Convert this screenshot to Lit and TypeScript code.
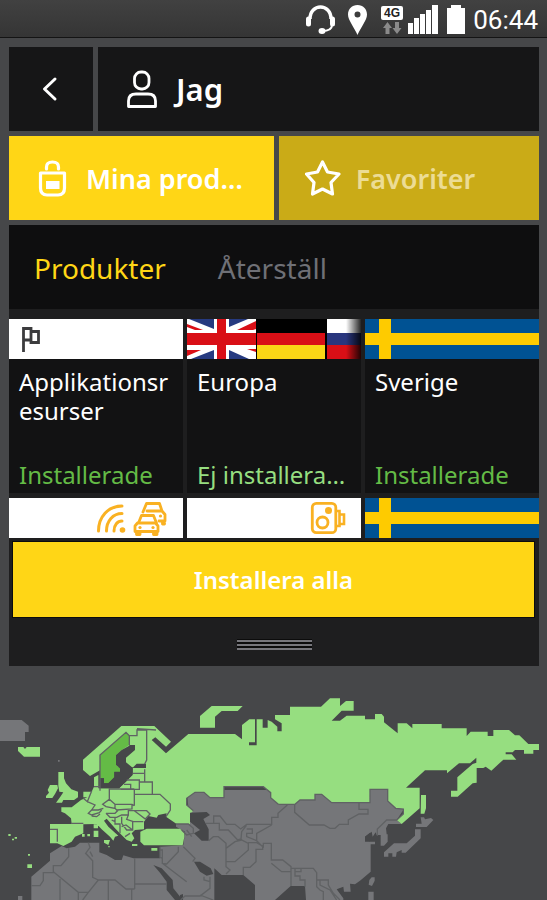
import { LitElement, html, css, svg, nothing } from "lit";
import { customElement, property, state } from "lit/decorators.js";
import { classMap } from "lit/directives/class-map.js";

const swedenFlag = html`<svg class="flag" viewBox="0 0 174 40" preserveAspectRatio="none" aria-hidden="true">
  <path fill="#005293" d="M0 0H174V40H0z" />
  <path fill="#fecb00" d="M14 0H26V14H174V26H26V40H14V26H0V14H14z" />
</svg>`;

const europeFlags = html`<svg class="flag" viewBox="0 0 174 40" preserveAspectRatio="none" aria-hidden="true">
  <defs>
    <linearGradient id="fade"><stop offset="0" stop-opacity="0" /><stop offset="1" stop-opacity="0.85" /></linearGradient>
  </defs>
  <path fill="#fff" d="M0 0H69V40H0z" />
  <path fill="#263a80" d="M2 0H27V10zM42 0H61L42 8zM4 40L27 31V40zM42 31L62 40H42z" />
  <path fill="#d90f16" d="M0 5L16 11H8L0 8zM69 2V10L66 11H50zM0 31H14L0 37zM60 30H69V33z" />
  <path fill="#fff" d="M27 0H42V11H69V30H42V40H27V30H0V11H27z" />
  <path fill="#d90f16" d="M30 0H39V14H69V26H39V40H30V26H0V14H30z" />
  <path fill="#000" d="M69 0H140V40H69z" />
  <path fill="#d90f16" d="M70 14H138V26H70z" />
  <path fill="#fad616" d="M70 26H138V40H70z" />
  <path fill="#fff" d="M140 0H174V14H140z" />
  <path fill="#29367e" d="M140 14H174V26H140z" />
  <path fill="#d90f16" d="M140 26H174V40H140z" />
  <path fill="url(#fade)" d="M159 0H174V40H159z" />
</svg>`;

const flagIcon = html`<svg class="strip-icon start" width="22" height="28" viewBox="0 0 22 28" fill="none" stroke="#3c3c3e" stroke-width="2.8" aria-hidden="true">
  <path d="M4.500 27V3.500H12V15H4.500M12 6.500H19.500V17.500H12V14" />
</svg>`;

const trafficIcon = html`<svg class="strip-icon end" width="72" height="36" viewBox="0 0 72 36" fill="none" stroke="#f9b122" stroke-width="3" stroke-linecap="round" aria-hidden="true">
  <path d="M2.500 31C2.500 17 12 6 26 6M10.500 31C10.500 21 17 13.500 26 13.500M18 31C18 25 21.500 21 26 21" />
  <circle cx="26.500" cy="30" r="2.800" fill="#f9b122" stroke="none" />
  <g stroke-linejoin="round" stroke-width="2.800">
    <path d="M47 12L50.500 3.500H63.500L66 11M51 11H66L69 14.500V21H63M66.500 21V24H68.500V21" />
    <path fill="#fff" d="M42.500 23L45.500 15.500H57.500L60.500 23" />
    <path fill="#fff" d="M41.500 23H59.500L62 26V31.500H39V26zM40.500 32V34.500H44V32M57.500 32V34.500H61V32" />
  </g>
  <circle cx="44" cy="27.500" r="1.600" fill="#f9b122" stroke="none" />
  <circle cx="57" cy="27.500" r="1.600" fill="#f9b122" stroke="none" />
  <circle cx="64.500" cy="16" r="1.600" fill="#f9b122" stroke="none" />
</svg>`;

const cameraIcon = html`<svg class="strip-icon end" width="36" height="34" viewBox="0 0 36 34" fill="none" stroke="#f9b122" stroke-width="2.800" aria-hidden="true">
  <rect x="2.300" y="2.300" width="23.500" height="29.400" rx="4" />
  <circle cx="12.500" cy="21.500" r="5.500" />
  <circle cx="18.500" cy="9.500" r="3.500" fill="#f9b122" stroke="none" />
  <path d="M26 10H29.500V25H26M29.500 13.500H34V23H29.500" stroke-width="2.600" />
</svg>`;

interface Product {
  name: string;
  status: string;
  installed: boolean;
  strip: unknown;
}

const products: Product[] = [
  { name: "Applikationsresurser", status: "Installerade", installed: true, strip: flagIcon },
  { name: "Europa", status: "Ej installera…", installed: false, strip: europeFlags },
  { name: "Sverige", status: "Installerade", installed: true, strip: swedenFlag },
];

@customElement("status-bar")
class StatusBar extends LitElement {
  static styles = css`
    :host {
      display: flex;
      justify-content: flex-end;
      align-items: center;
      height: 37px;
      padding-right: 9px;
      background: linear-gradient(#414141, #353535);
      border-bottom: 1px solid #141414;
      color: #fff;
      font: 26px/40px Roboto, sans-serif;
    }
    .icons {
      flex: none;
      margin-right: 7px;
    }
    .clock {
      padding-top: 2px;
    }
    .net {
      font: bold 12px "Liberation Sans", sans-serif;
    }
  `;
  render() {
    return html`<svg class="icons" width="162" height="36" viewBox="303 0 162 36" aria-hidden="true">
        <g fill="none" stroke="#fff">
          <path stroke-width="3.500" d="M309 18C309 2 330 2 330 18" />
          <path stroke-width="2" d="M331 24C331 28 327 30 321 30" />
          <path stroke-width="5" stroke-linecap="round" d="M307.500 18V23M331.500 18V23" />
        </g>
        <ellipse cx="321" cy="30" rx="3.500" ry="3" fill="#fff" />
        <path fill="#fff" fill-rule="evenodd" d="M356.500 4C351 4 347 8 347 13.500C347 19 353 26 356.500 34C360 26 366 19 366 13.500C366 8 362 4 356.500 4zM356.500 10.500A3 3 0 1 1 356.500 16.500A3 3 0 1 1 356.500 10.500z" />
        <rect x="380" y="5" width="22" height="14" rx="2" fill="#fff" />
        <text class="net" x="391" y="16" text-anchor="middle" fill="#222">4G</text>
        <path fill="#8a8a8a" d="M386.500 21L391 27H388.500V33H384.500V27H382zM396 33L391.500 27H394V21H398V27H400.500z" />
        <path fill="#fff" d="M407 22H412V33H407zM413 17H418V33H413zM419 13H424V33H419zM425 9H430V33H425zM431 4H437V33H431zM450 4H460V7H464V33H446V7H450z" />
      </svg>
      <time class="clock">06:44</time>`;
  }
}

@customElement("product-tile")
class ProductTile extends LitElement {
  @property({ attribute: false }) product?: Product;
  @property({ attribute: false }) strip: unknown;

  static styles = css`
    :host {
      display: block;
      min-width: 0;
    }
    .tile {
      display: flex;
      flex-direction: column;
      width: 100%;
      padding: 0;
      border: 0;
      background: #121213;
      color: #fff;
      font: 24px/29px "Noto Sans", sans-serif;
      text-align: left;
    }
    .strip {
      display: flex;
      align-items: center;
      width: 100%;
      height: 40px;
      background: #fff;
    }
    .flag {
      display: block;
      width: 100%;
      height: 40px;
    }
    .start {
      margin-left: 10px;
    }
    .end {
      margin-left: auto;
      margin-right: 15px;
    }
    .text {
      display: flex;
      flex-direction: column;
      justify-content: space-between;
      box-sizing: border-box;
      height: 134px;
      width: 100%;
      padding: 8px 8px 4px 10px;
    }
    .name {
      overflow-wrap: anywhere;
    }
    .status {
      color: #96de80;
      white-space: nowrap;
    }
    .installed {
      color: #64bb46;
    }
  `;
  render() {
    const p = this.product;
    return html`<button class="tile" type="button">
      <span class="strip">${p ? p.strip : this.strip}</span>
      ${p
        ? html`<span class="text">
            <span class="name">${p.name}</span>
            <span class=${classMap({ status: true, installed: p.installed })}>${p.status}</span>
          </span>`
        : nothing}
    </button>`;
  }
}

/* Coastlines and borders, in a 1641 x 630 grid. */
const greyLand = [
  "M0 90H65L86 107V126H75V153H0z",
  "M94 630V560L150 512V490L185 468L200 475L225 470L240 458H298V487L320 495L345 510H365L370 496L400 505H480V470L550 466L555 425L528 410V402H570L560 300H1200L1212 357L1190 390L1205 402H1165L1158 415L1160 433H1163V455L1152 467H1142V435H1130L1127 427L1118 440L1115 425L1095 440L1110 455H1125V463H1112V545L1080 572L1065 583L1050 581L1052 605H1032L1030 590L1010 598L1030 625V630z",
  "M1245 418H1262V445L1217 488H1205V480L1190 487L1188 500H1177V490H1165V500H1152V487L1182 460H1220L1245 437z",
  "M1262 382H1272L1275 388L1293 384L1300 390L1280 411H1248V401H1265z",
  "M1115 562H1124V572L1116 588L1106 584L1108 570z",
  "M1105 605H1121V630H1105zM54 618H67V630H54zM174 210H179V215H174z",
].join("");

const greenLand = [
  "M54 171H70L75 177L80 171H120V200H72L54 183z",
  "M150 285H172L174 295L165 312L157 324H138V318L147 308L143 300z",
  "M175 246H192V265L198 280L214 298L234 305V322L222 330H190L186 338H168L180 322L190 307L178 305L175 288z",
  "M249 209L364 108H463L513 155L498 170L466 142L455 150L498 190L565 132H705L726 148V105L748 88H765V157H747V166H770V88H788V113H803V90L815 95L832 110V124H845V100L825 88V75H870V50H963L990 25H1020V48L1038 33H1061V62H1025L995 92H1020L1040 77H1095V88H1125V72H1145L1152 80V97L1193 130V100H1220L1237 115V102H1325V115H1400V138L1412 125H1463V138H1480V120H1527L1545 136H1558L1585 162H1617V180H1600V191H1572V180H1545L1538 187H1517V193H1535L1549 209H1510L1474 242L1457 230L1450 234H1430V278L1418 280L1373 320H1353V302H1372V262L1418 222L1429 218V203L1410 220H1377L1341 250V241H1275L1218 293H1259V355L1205 402L1190 390L1210 372V357L1187 355L1163 333V298H1110V338H995L965 313H945V330H900L885 343H835L812 323V308L790 290H672V323H630L612 307H585L560 325V345L580 362L570 372V402H530L498 380L500 370L475 375L470 383L445 378L432 395V418L405 420L395 430L403 445L395 455L380 450L358 428L345 415L320 386L312 392L325 410L355 437L345 440L340 452L330 440L305 418L290 402L250 403V430L225 440L215 455L190 468L172 460H150V402H215L213 385L195 370L184 365V352H215L243 330L262 322H250V305H275L282 290V262L295 255V295H357L398 255V232H300V241L270 258L249 240z",
  "M421 425L440 416H540L553 428V440L548 466H432L421 455z",
  "M1263 315H1278V355L1273 371H1262z",
  "M600 78L635 48H728L713 63H665L645 80V113H600z",
  "M281 403H294V415H281zM281 422H295V441H281zM312 450H330L325 465L312 458zM396 462H412V468H396zM454 474H472V482H454zM246 432H254V440H246zM262 432H270V439H262zM82 523H96V534H82zM25 432H32V438H25zM36 446H42V451H36zM44 441H51V446H44zM84 492H90V497H84zM325 468H329V472H325z",
].join("");

const sweden = "M300 195L378 127L388 137V165L365 180L348 195V225L360 235V245H343V262L325 280H312V265H300z";

const sea = [
  "M388 165H405V180L378 203V217L398 233L410 221H438V234H398V252L378 275L357 295H298V265H312V280H325L343 262V246H360V235L348 225V195L365 180L388 167z",
  "M570 368L620 366L630 375L610 387L626 418V452H605L582 430L600 420L570 395z",
  "M582 515H600L632 535L640 552L620 557L600 545z",
  "M643 535L665 555H730L765 585V630H643z",
  "M825 630L872 588H915L918 630z",
  "M460 525L485 535L518 570L520 595L548 630H525L500 600V575L480 548z",
  "M1095 440L1110 428V455H1095z",
  "M540 615L549 612V630H540z",
].join("");

const borders = [
  "M300 240V195L378 127L388 137V165M388 137H411V120H440M411 116L468 120M440 120V210L434 222",
  "M398 250H434V238M380 270H418V298H362M372 283H392V297M434 250V276M418 276H457V313M300 195V302M282 290H298M403 297V347M418 313H480L511 342V360L498 380M403 313H480",
  "M328 295V328L308 343L318 350L345 355V343L328 328M328 297H403M345 343H396L403 347M345 355L350 360L396 357V343M262 335L285 345L275 360L295 360L310 355M275 360L265 370L275 375L298 368L305 360M250 325L262 335L268 320L275 303M318 370H345L355 360M318 370L330 382H350L365 375H385V362H440L450 372L436 387L420 375L403 362M385 375L380 388L400 395H430M398 395V420H380L365 400V380M345 383V402H360V430M365 410L378 405L398 420M335 390L345 395M375 440L390 430M300 372L290 380L275 378M213 400H250M150 418H172V455",
  "M835 343L812 323V308L790 290H672V323H630L612 307H585L560 325V345L580 362M835 343H885L900 330H945V313H965L995 338H1110V298H1163V333L1187 355L1210 357V372L1190 390H1160L1132 417V437M884 343V367L928 405H972L990 415H1005L1018 403H1045V390L1077 372H1104V358H1077V340M862 345L834 370V382H815V403H740L722 417L705 403H680L660 378H641V400H618M641 400H658V420H685L713 450L723 447L725 425L740 405M740 417H757V430H740V440L770 452V430L815 405M770 452L788 470V478L768 478V515L750 532H730V555M678 552L690 540L678 530V515H705L745 480V460L725 450L705 455L678 475V460L655 440H640L626 452M678 475V530M745 458H770L790 470V460H814V510H848L873 530V545H845L814 520M873 530V588M873 535H940L950 548V590L960 600L970 605V630M885 535V545H903V535M885 545V558H900V570H915V590M950 570H985V585L1000 610L1020 630M960 570V585L990 600L1010 630",
  "M528 402H565L580 415V430L560 435L545 420M560 420L575 440M480 470V502L487 505V520L500 522L535 485V470M487 520L560 575M550 470L585 505L578 515M480 480H487V520M542 630L555 618H600L630 595V560M600 615L640 630M612 560V570L630 575",
  "M206 475V500L183 527H160V548H130V572L120 587H94M160 530V545L235 607H265L295 570H345L378 597H404M265 607L248 630M180 567V630M235 607V630M265 458L270 472L257 490L278 512V562L295 570M278 500L270 485M404 505V582H500M404 582V597M395 597V630M325 570V630",
].join("");

@customElement("world-map")
class WorldMap extends LitElement {
  static styles = css`
    :host {
      display: block;
    }
    .map {
      display: block;
      width: 100%;
    }
  `;
  render() {
    return html`<svg class="map" viewBox="0 0 1641 630" role="img" aria-label="Karta">
      ${svg`<path fill="#757679" d=${greyLand} />
      <path fill="#96de80" d=${greenLand} />
      <path fill="#64bb46" d=${sweden} />
      <path fill="#464749" d=${sea} />
      <path fill="none" stroke="#606264" stroke-width="4" d=${borders} />`}
    </svg>`;
  }
}

@customElement("app-root")
class AppRoot extends LitElement {
  @state() private section = 0;

  static styles = css`
    :host {
      display: block;
      min-height: 100vh;
      background: #464749;
      color: #fff;
      font-family: "Noto Sans", sans-serif;
    }
    button {
      border: 0;
      margin: 0;
      padding: 0;
      color: inherit;
      font: inherit;
    }
    main {
      display: flex;
      flex-direction: column;
      gap: 5px;
      padding: 9px 8px 24px 9px;
    }
    .row {
      display: flex;
      gap: 5px;
      height: 84px;
    }
    .back {
      display: flex;
      flex: none;
      align-items: center;
      justify-content: center;
      width: 84px;
      background: #161617;
    }
    .title {
      display: flex;
      flex: 1;
      align-items: center;
      gap: 18px;
      margin: 0;
      padding-left: 28px;
      background: #161617;
      font-size: 31px;
      font-weight: 600;
    }
    .tab {
      display: flex;
      flex: 260 1 0;
      align-items: center;
      gap: 15px;
      padding-left: 26px;
      background: #caab17;
      color: #ecdc95;
      font-size: 27px;
      font-weight: 600;
      white-space: nowrap;
    }
    .tab.active {
      flex-grow: 265;
      gap: 17px;
      background: #ffd616;
      color: #fff;
    }
    .panel {
      background: #1e1e1f;
    }
    .subtabs {
      display: flex;
      gap: 52px;
      height: 84px;
      padding-left: 25px;
      background: #0e0e0f;
      font-size: 28px;
    }
    .subtab {
      padding-top: 2px;
      background: none;
      color: #6f7076;
    }
    .subtab.active {
      color: #ffd616;
    }
    .tiles {
      display: grid;
      grid-template-columns: repeat(3, 1fr);
      gap: 5px 4px;
      padding-top: 10px;
    }
    .install {
      display: block;
      width: calc(100% - 9px);
      height: 75px;
      margin: 4px 5px 0 4px;
      background: #ffd616;
      box-shadow: 0 0 0 1px #0c0c0c;
      font-size: 24px;
      font-weight: 600;
    }
    .handle {
      display: flex;
      align-items: center;
      justify-content: center;
      width: 100%;
      height: 49px;
      padding-top: 6px;
      box-sizing: border-box;
      background: none;
    }
  `;

  render() {
    return html`<status-bar></status-bar>
      <main>
        <header class="row">
          <button class="back" type="button" aria-label="Tillbaka">
            <svg width="20" height="28" viewBox="0 0 20 28" fill="none" stroke="#fff" stroke-width="3" stroke-linecap="round" stroke-linejoin="round" aria-hidden="true">
              <path d="M14 4L3.500 14L14 24" />
            </svg>
          </button>
          <h1 class="title">
            <svg width="32" height="40" viewBox="0 0 32 40" fill="none" stroke="#fff" stroke-width="2.800" stroke-linejoin="round" aria-hidden="true">
              <rect x="8.500" y="3" width="14.500" height="17" rx="6.500" />
              <path d="M2.500 37.500V32Q2.500 25 10 25H22Q29.500 25 29.500 32V37.500z" />
            </svg>
            Jag
          </h1>
        </header>
        <nav class="row">
          <button class="tab active" type="button">
            <svg width="34" height="40" viewBox="0 0 34 40" fill="none" stroke="#fff" stroke-width="3.200" stroke-linecap="round" aria-hidden="true">
              <path d="M11.500 11V9Q11.500 4 17.500 4Q23.500 4 23.500 9V11" />
              <path d="M5.500 15H29.500V30Q29.500 37 23 37H12Q5.500 37 5.500 30z" stroke-linejoin="round" />
              <path d="M12 24H23.500V30H12z" fill="#fff" stroke-width="2" />
            </svg>
            Mina prod…
          </button>
          <button class="tab" type="button">
            <svg width="36" height="38" viewBox="0 0 36 38" fill="none" stroke="#fff" stroke-width="3.200" stroke-linejoin="round" aria-hidden="true">
              <path d="M17.500 3L22.500 13L34 15L26 23.500L27.500 35L17.500 30L7.500 35L9 23.500L1.500 15L12.500 13z" />
            </svg>
            Favoriter
          </button>
        </nav>
        <section class="panel">
          <div class="subtabs">
            ${["Produkter", "Återställ"].map(
              (label, i) => html`<button
                type="button"
                class=${classMap({ subtab: true, active: i === this.section })}
                @click=${() => (this.section = i)}
              >${label}</button>`
            )}
          </div>
          <div class="tiles">
            ${products.map((p) => html`<product-tile .product=${p}></product-tile>`)}
            ${[trafficIcon, cameraIcon, swedenFlag].map((s) => html`<product-tile .strip=${s}></product-tile>`)}
          </div>
          <button class="install" type="button">Installera alla</button>
          <button class="handle" type="button" aria-label="Dra">
            <svg width="75" height="12" viewBox="0 0 75 12" aria-hidden="true">
              <path fill="#0c0c0c" d="M0 0H75V11H0z" />
              <path fill="#77777c" d="M0 1H75V3H0zM0 5H75V7H0zM0 9H75V11H0z" />
            </svg>
          </button>
        </section>
      </main>
      <world-map></world-map>`;
  }
}
